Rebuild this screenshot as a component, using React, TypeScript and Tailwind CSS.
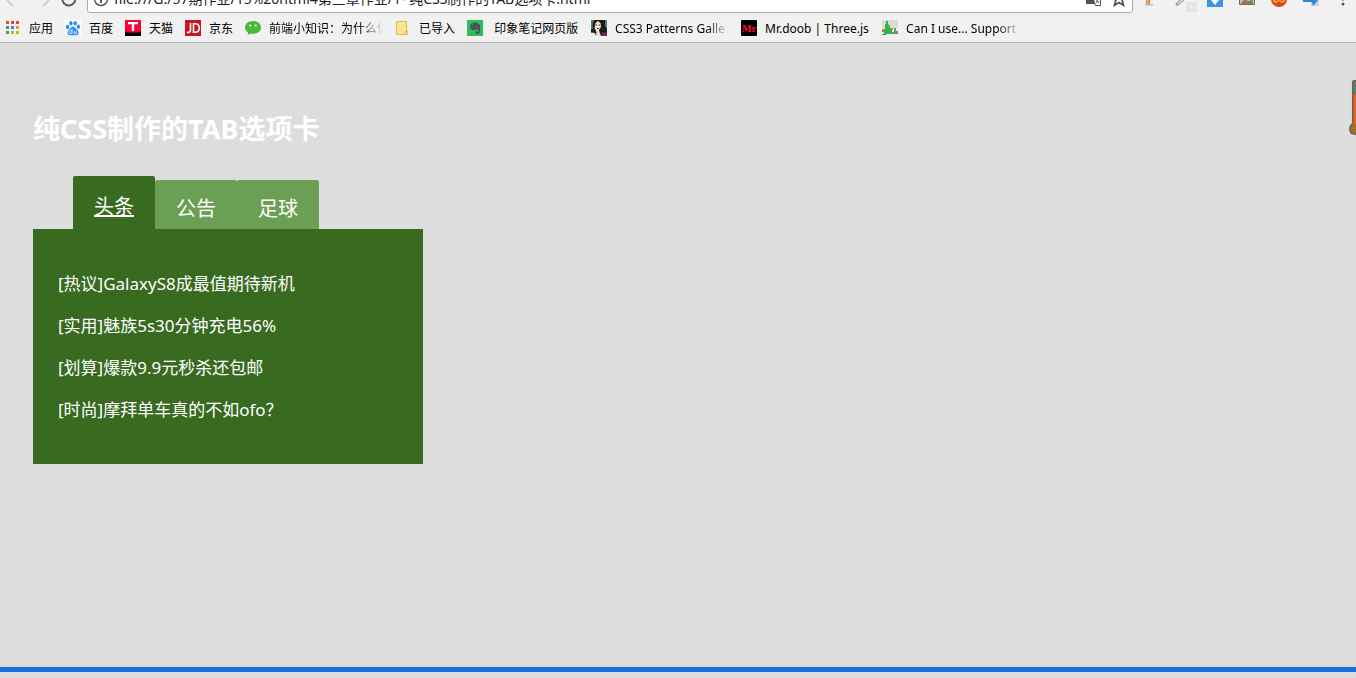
import type { ReactNode } from 'react';
import { useState } from 'react';

type Bookmark = { label: string; icon: ReactNode; fade?: boolean; width?: string };

const AppsIcon = () => (
  <svg width="16" height="16" viewBox="0 0 16 16" shapeRendering="crispEdges" className="shrink-0">
    {[
      ['#ea4335', '#ea4335', '#ea4335'],
      ['#34a567', '#4285f4', '#d2ab2c'],
      ['#34a567', '#d2ab2c', '#d2ab2c'],
    ].map((row, y) =>
      row.map((fill, x) => <rect key={`${x}-${y}`} x={1 + x * 5} y={1 + y * 5} width="3" height="3" fill={fill} />),
    )}
  </svg>
);

const PawIcon = () => (
  <svg width="16" height="16" viewBox="0 0 16 16" className="shrink-0">
    <rect width="16" height="16" fill="#fff" />
    <g fill="#2b8bf0">
      <ellipse cx="2.6" cy="7" rx="1.7" ry="2.2" />
      <ellipse cx="5.9" cy="3.2" rx="1.7" ry="2.3" />
      <ellipse cx="10.2" cy="3.2" rx="1.7" ry="2.3" />
      <ellipse cx="13.4" cy="6.7" rx="1.6" ry="2.2" />
      <path d="M8 6.4c1.700 0 2.600 1.700 3.900 3 1.500 1.400 2.100 2.400 1.700 4-.5 1.700-2.300 2.100-5.600 1.800-3.300.3-5-.1-5.500-1.800-.4-1.600.2-2.600 1.700-4C5.500 8.100 6.300 6.400 8 6.400z" />
    </g>
    <path d="M7 8.800v4.600H5.300a1.300 1.300 0 0 1 0-2.700H7M9 10.700v2.700h2.400v-2.700" fill="none" stroke="#fff" strokeWidth="0.8" />
  </svg>
);

const TmallIcon = () => (
  <svg width="16" height="16" viewBox="0 0 16 16" className="shrink-0">
    <rect width="16" height="16" fill="#ff0036" />
    <path d="M0 11 2 12.500h12l2-1.500V16H0z" fill="#000" />
    <path d="M3 2h10v2.200H9.200V11H6.800V4.200H3z" fill="#fff" />
  </svg>
);

const JdIcon = () => (
  <svg width="16" height="16" viewBox="0 0 16 16" className="shrink-0">
    <rect width="16" height="16" fill="#c91623" />
    <path d="M5.500 3v7.200c0 1.600-.8 2.300-3.700 2.300M8.500 3.800v8.400h1.700c2.700 0 4-1.500 4-4.200s-1.300-4.200-4-4.200z" fill="none" stroke="#fff" strokeWidth="1.600" />
  </svg>
);

const ChatIcon = () => (
  <svg width="16" height="16" viewBox="0 0 16 16" className="shrink-0">
    <path d="M8 1c4.600 0 8 2.800 8 6.400s-3.400 6.300-8 6.300c-.9 0-1.700-.1-2.500-.3L2.600 15l.5-2.600C1.200 11.200 0 9.500 0 7.400 0 3.800 3.400 1 8 1z" fill="#46bb36" />
    <circle cx="5.300" cy="5.500" r="1.100" fill="#fff" />
    <circle cx="10.700" cy="5.500" r="1.100" fill="#fff" />
  </svg>
);

const FolderIcon = () => (
  <svg width="16" height="16" viewBox="0 0 16 16" className="shrink-0">
    <path d="M1.500 1.500h10v9.500h1v3.500h-11z" fill="#fbe39c" stroke="#e4c13c" />
    <path d="M10.500 14v-3h2v3" fill="#fbe39c" stroke="#e4c13c" />
  </svg>
);

const ElephantIcon = () => (
  <svg width="16" height="16" viewBox="0 0 16 16" className="shrink-0">
    <rect width="16" height="16" fill="#2dbe60" />
    <path d="M6 2.500h3.500c.5 0 .7.600.9 1 1.600.1 2.300.5 2.500 1.600.5 2.700.4 5.600-.2 7.500-.4 1.200-1.300 1.400-2.200 1.400-1.500 0-2-.7-2-1.600 0-1 .6-1.600 2-1.500v1.300h1c.3-.9.200-1.700-.3-2-.8-.3-1.700-.2-2.300-.9-.7 1-2.200 1.100-3.400.9C3.600 9.900 3 8 3 5.500h3z" fill="#4a5355" />
    <path d="m3 4.900 2.400-2.400v2.400z" fill="#4a5355" />
    <path d="M10.200 6.400c.5-.4 1.100-.3 1.400.3z" fill="#2dbe60" />
  </svg>
);

const PortraitIcon = () => (
  <svg width="16" height="16" viewBox="0 0 16 16" className="shrink-0">
    <rect width="16" height="16" fill="#191c20" />
    <path d="M0 0h3L1.500 5 2 9H0zM14 0h2v9l-2-3z" fill="#527d73" />
    <path d="M4.500 3 7 1l2.500 2 .5 4-2 3 .5 2 1.500 4H5l.500-4L3.500 8z" fill="#f3dfc4" />
    <path d="M4.500 5h1.500M7.500 5H9M6 8.500h2" stroke="#742b38" />
    <path d="M0 12.500l4 .5 1 3H0z" fill="#e9edda" />
    <path d="M11 12l5 1v3h-5z" fill="#6c294a" />
  </svg>
);

const DoobIcon = () => (
  <svg width="16" height="16" viewBox="0 0 16 16" className="shrink-0">
    <rect width="16" height="16" rx="1" fill="#000" />
    <text x="8" y="12" textAnchor="middle" fontFamily="DejaVu Serif, serif" fontSize="9" fontWeight="700" fill="#ff0a32">
      Mr
    </text>
  </svg>
);

const CanIUseIcon = () => (
  <svg width="16" height="16" viewBox="0 0 16 16" className="shrink-0">
    <rect width="16" height="16" fill="#dedacd" />
    <path d="M0 8h16v8H0z" fill="#efeee5" />
    <path d="M4 1h2v3l2 2v3l2 1v4H2v-4l1-2V4h1z" fill="#36b24a" />
    <path d="M12 8h2v3h2v3H9v-2h3z" fill="#4eab5e" />
    <path d="M0 9h2v3H0zM8 8h3v2H8z" fill="#bd7765" />
    <path d="M0 14.500h4M11 13.500h4" stroke="#528a62" />
  </svg>
);

const bookmarks: Bookmark[] = [
  { label: '应用', icon: <AppsIcon /> },
  { label: '百度', icon: <PawIcon /> },
  { label: '天猫', icon: <TmallIcon /> },
  { label: '京东', icon: <JdIcon /> },
  { label: '前端小知识：为什么你', icon: <ChatIcon />, fade: true, width: 'w-[114px]' },
  { label: '已导入', icon: <FolderIcon /> },
  { label: ' 印象笔记网页版', icon: <ElephantIcon />, width: 'w-[88px]' },
  { label: 'CSS3 Patterns Galle', icon: <PortraitIcon />, fade: true, width: 'w-[114px]' },
  { label: 'Mr.doob | Three.js', icon: <DoobIcon />, width: 'w-[105px]' },
  { label: 'Can I use... Support', icon: <CanIUseIcon />, fade: true, width: 'w-[114px]' },
];

const iconButton = 'flex w-4 shrink-0 items-center justify-center';

function Toolbar() {
  return (
    <div className="flex h-[13px] items-end overflow-hidden">
      <div className="flex h-7 w-full shrink-0 items-center">
        <nav aria-label="History" className="flex w-[87px] shrink-0 items-center pr-1">
          <button type="button" aria-label="Back" className="flex w-7 justify-center">
            <svg width="18" height="18" viewBox="0 0 18 18" fill="none" stroke="#cfcfd3" strokeWidth="2">
              <path d="M17 9H2M8 2 1 9l7 7" />
            </svg>
          </button>
          <button type="button" aria-label="Forward" className="flex w-7 justify-center">
            <svg width="18" height="18" viewBox="0 0 18 18" fill="none" stroke="#cfcfd3" strokeWidth="2">
              <path d="M1 9h15M10 2l7 7-7 7" />
            </svg>
          </button>
          <button type="button" aria-label="Reload" className="flex w-7 justify-center">
            <svg width="16" height="16" viewBox="0 0 16 16" fill="none" stroke="#5a5a5f" strokeWidth="2">
              <path d="M13 4a6.500 6.500 0 1 0 1.300 5M14 1v5H9" />
            </svg>
          </button>
        </nav>
        <div className="flex h-7 min-w-0 flex-1 items-center rounded-[3px] border border-[#a9a9a9] bg-white px-[5px]">
          <svg width="16" height="16" viewBox="0 0 16 16" fill="none" stroke="#55555a" strokeWidth="1.500" className="shrink-0">
            <circle cx="8" cy="8" r="6.500" />
            <path d="M8 7v5M8 4v1.500" strokeWidth="2" />
          </svg>
          <input
            aria-label="Address"
            readOnly
            value="file:///G:/57期作业/15%20html4第三章作业/1- 纯CSS制作的TAB选项卡.html"
            className="ml-[5px] min-w-0 flex-1 text-sm text-[#222] outline-none"
          />
          <div className="flex shrink-0 items-center gap-[9px]">
            <button type="button" aria-label="Translate" className={iconButton}>
              <svg width="16" height="16" viewBox="0 0 16 16">
                <path d="M0 1h9l2 12H0z" fill="#4d5159" />
                <path d="M8.500 4.500h6v10h-5l-1-3" fill="#fff" stroke="#4d5159" />
                <path d="M10 8h4M12 7v1l-2 4M11 9l2 3" fill="none" stroke="#4d5159" />
              </svg>
            </button>
            <button type="button" aria-label="Bookmark this page" className={iconButton}>
              <svg width="16" height="16" viewBox="0 0 16 16" fill="none" stroke="#4d5159" strokeWidth="1.700">
                <path d="m8 1 2 5h5l-3.800 3.300 1.300 5L8 11.500l-4.500 2.800 1.300-5L1 6h5z" />
              </svg>
            </button>
          </div>
        </div>
        <div className="flex shrink-0 items-center gap-4 pr-[5px] pl-[10px]">
          <button type="button" aria-label="Tools" className={iconButton}>
            <svg width="16" height="16" viewBox="0 0 16 16">
              <path d="M3 2h4v12H3z" fill="#dc8746" />
              <path d="M2 13h8v1.500H2z" fill="#d1bba9" />
              <path d="M4 2h1v11H4z" fill="#f4bd86" />
            </svg>
          </button>
          <button type="button" aria-label="Color picker" className={iconButton}>
            <svg width="16" height="16" viewBox="0 0 16 16" className="overflow-visible">
              <path d="m1 13 8-8 2 2-8 7H1z" fill="#ddd" stroke="#858585" />
              <rect x="11" y="11" width="11" height="10" fill="#e5e4e2" />
              <path d="M15 15.500h2" stroke="#fff" />
            </svg>
          </button>
          <button type="button" aria-label="Download" className={iconButton}>
            <svg width="16" height="16" viewBox="0 0 16 16">
              <rect width="16" height="16" fill="#3d92e6" />
              <path d="M6 4h4v5h2l-4 5-4-5h2z" fill="#fff" />
            </svg>
          </button>
          <button type="button" aria-label="Screenshot" className={iconButton}>
            <svg width="16" height="16" viewBox="0 0 16 16">
              <path d="M.5 3.500h15v10H.5z" fill="#b9c5cc" stroke="#776c68" />
              <path d="M2 12 6 8l3 2 5-1v4H2z" fill="#9d7655" />
              <path d="M9 8h5v3z" fill="#6eaa70" />
            </svg>
          </button>
          <button type="button" aria-label="Mask" className={iconButton}>
            <svg width="16" height="16" viewBox="0 0 16 16">
              <circle cx="8" cy="8" r="8" fill="#e4402f" />
              <path d="M2 7c1 5 4 5 6 1 2 4 5 4 6-1" fill="none" stroke="#f7b21b" strokeWidth="1.800" />
            </svg>
          </button>
          <button type="button" aria-label="Send page" className={iconButton}>
            <svg width="16" height="16" viewBox="0 0 16 16">
              <path d="M8 7h8v8H8z" fill="#cbd1d5" />
              <path d="M0 5h8V2l7 7-5 6-1-4H0z" fill="#2f83df" />
            </svg>
          </button>
          <button type="button" aria-label="Menu" className={iconButton}>
            <svg width="16" height="16" viewBox="0 0 16 16" fill="#55555a">
              <circle cx="8" cy="3" r="1.500" />
              <circle cx="8" cy="8" r="1.500" />
              <circle cx="8" cy="13" r="1.500" />
            </svg>
          </button>
        </div>
      </div>
    </div>
  );
}

function BookmarkBar() {
  return (
    <nav aria-label="Bookmarks" className="flex h-[30px] items-center gap-3 border-b border-[#b3b3b3] pl-[5px]">
      {bookmarks.map(({ label, icon, fade, width }) => (
        <a key={label} href="#" className="flex shrink-0 items-center gap-2 text-xs leading-4 text-black">
          {icon}
          <span
            className={`overflow-hidden pt-[2px] whitespace-pre ${width ?? ''} ${
              fade ? '[mask-image:linear-gradient(to_right,black_80%,transparent)]' : ''
            }`}
          >
            {label}
          </span>
        </a>
      ))}
    </nav>
  );
}

const news = [
  '[热议]GalaxyS8成最值期待新机',
  '[实用]魅族5s30分钟充电56%',
  '[划算]爆款9.9元秒杀还包邮',
  '[时尚]摩拜单车真的不如ofo？',
];

const tabs = ['头条', '公告', '足球'];

function TabCard() {
  const [active, setActive] = useState(0);
  return (
    <section className="w-[390px] max-w-full">
      <div role="tablist" className="flex h-[53px] items-end pl-10 text-xl text-white">
        {tabs.map((tab, index) => (
          <button
            key={tab}
            type="button"
            role="tab"
            id={`tab-${index}`}
            aria-selected={index === active}
            aria-controls="tab-panel"
            onClick={() => setActive(index)}
            className={`w-[82px] rounded-t-[2px] ${
              index === active ? 'h-[53px] bg-[#386a1f] pt-2 underline' : 'h-[49px] bg-[#6a9f54] pt-2'
            }`}
          >
            {tab}
          </button>
        ))}
      </div>
      <div
        role="tabpanel"
        id="tab-panel"
        aria-labelledby={`tab-${active}`}
        className="bg-[#386a1f] px-[25px] pt-[34px] pb-[33px]"
      >
        <ul className="text-[17px] leading-[42px] text-white">
          {news.map((item) => (
            <li key={item}>{item}</li>
          ))}
        </ul>
      </div>
    </section>
  );
}

export default function App() {
  return (
    <div className="relative flex min-h-screen flex-col overflow-hidden bg-[#dddddd] font-['Noto_Sans','Noto_Sans_CJK_SC',sans-serif]">
      <header className="bg-[#f1f1f1]">
        <Toolbar />
        <BookmarkBar />
      </header>
      <main className="flex-1 px-[33px] pt-[66px]">
        <h1 className="mb-[27px] text-[27px] leading-10 font-bold text-white">纯CSS制作的TAB选项卡</h1>
        <TabCard />
      </main>
      <svg width="8" height="56" viewBox="0 0 8 56" className="absolute top-20 right-0">
        <path d="M8 .7H5.500L4.700 2v42a6 6 0 0 0 3.300 10.500" fill="#b36b12" stroke="#53666b" strokeWidth="1.500" />
        <path d="M5.500 3H8v11H5.500z" fill="#5b7a67" />
        <path d="M5.500 14H8v30H5.500z" fill="#e65f20" />
        <path d="M4.700 44C1 46 1 52 4.700 54.200" fill="#b36b12" stroke="#53666b" strokeWidth="1.500" />
      </svg>
      <div className="mb-[6px] h-[5px] bg-[#1a6fe0]" />
    </div>
  );
}
